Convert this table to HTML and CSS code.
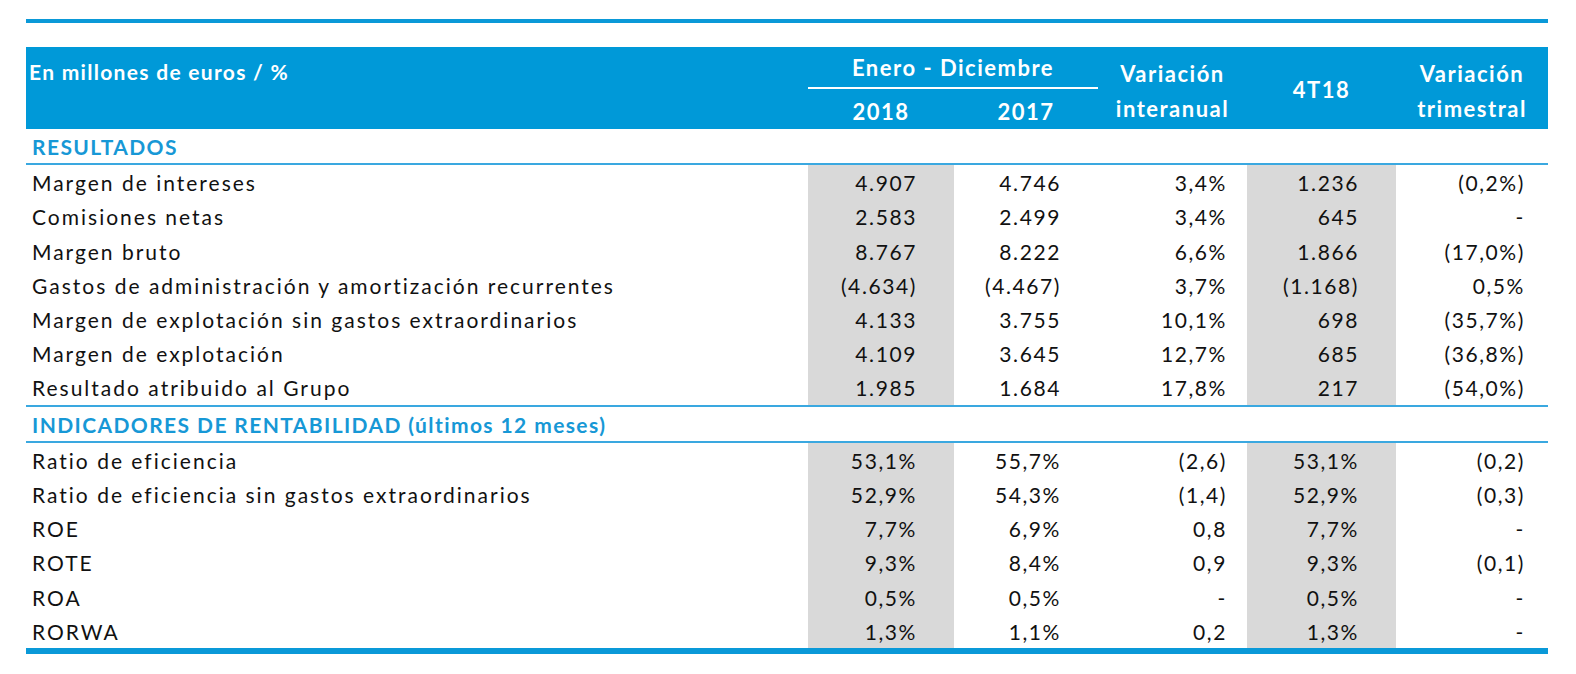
FILE: index.html
```html
<!DOCTYPE html>
<html lang="es">
<head>
<meta charset="utf-8">
<title>Resultados</title>
<link rel="stylesheet" href="styles.css">
</head>
<body>
<div class="wrap">
  <div class="top-rule"></div>
  <table class="fin">
    <colgroup>
      <col class="c-label"><col class="c-2018"><col class="c-2017"><col class="c-var"><col class="c-4t"><col class="c-tri">
    </colgroup>
    <thead>
      <tr class="h1">
        <th class="h-label" rowspan="2">En millones de euros / %</th>
        <th class="h-period" colspan="2"><span>Enero - Diciembre</span></th>
        <th class="h-two" rowspan="2">Variación<br>interanual</th>
        <th class="h-one" rowspan="2">4T18</th>
        <th class="h-two" rowspan="2">Variación<br>trimestral</th>
      </tr>
      <tr class="h2">
        <th class="h-year">2018</th>
        <th class="h-year">2017</th>
      </tr>
    </thead>
    <tbody>
      <tr class="sec"><td colspan="6">RESULTADOS</td></tr>
      <tr><td>Margen de intereses</td><td class="g">4.907</td><td>4.746</td><td class="v">3,4%</td><td class="g">1.236</td><td class="t">(0,2%)</td></tr>
      <tr><td>Comisiones netas</td><td class="g">2.583</td><td>2.499</td><td class="v">3,4%</td><td class="g">645</td><td class="t">-</td></tr>
      <tr><td>Margen bruto</td><td class="g">8.767</td><td>8.222</td><td class="v">6,6%</td><td class="g">1.866</td><td class="t">(17,0%)</td></tr>
      <tr><td>Gastos de administración y amortización recurrentes</td><td class="g">(4.634)</td><td>(4.467)</td><td class="v">3,7%</td><td class="g">(1.168)</td><td class="t">0,5%</td></tr>
      <tr><td>Margen de explotación sin gastos extraordinarios</td><td class="g">4.133</td><td>3.755</td><td class="v">10,1%</td><td class="g">698</td><td class="t">(35,7%)</td></tr>
      <tr><td>Margen de explotación</td><td class="g">4.109</td><td>3.645</td><td class="v">12,7%</td><td class="g">685</td><td class="t">(36,8%)</td></tr>
      <tr class="last"><td>Resultado atribuido al Grupo</td><td class="g">1.985</td><td>1.684</td><td class="v">17,8%</td><td class="g">217</td><td class="t">(54,0%)</td></tr>
      <tr class="sec"><td colspan="6">INDICADORES DE RENTABILIDAD (últimos 12 meses)</td></tr>
      <tr><td>Ratio de eficiencia</td><td class="g">53,1%</td><td>55,7%</td><td class="v">(2,6)</td><td class="g">53,1%</td><td class="t">(0,2)</td></tr>
      <tr><td>Ratio de eficiencia sin gastos extraordinarios</td><td class="g">52,9%</td><td>54,3%</td><td class="v">(1,4)</td><td class="g">52,9%</td><td class="t">(0,3)</td></tr>
      <tr><td>ROE</td><td class="g">7,7%</td><td>6,9%</td><td class="v">0,8</td><td class="g">7,7%</td><td class="t">-</td></tr>
      <tr><td>ROTE</td><td class="g">9,3%</td><td>8,4%</td><td class="v">0,9</td><td class="g">9,3%</td><td class="t">(0,1)</td></tr>
      <tr><td>ROA</td><td class="g">0,5%</td><td>0,5%</td><td class="v">-</td><td class="g">0,5%</td><td class="t">-</td></tr>
      <tr><td>RORWA</td><td class="g">1,3%</td><td>1,1%</td><td class="v">0,2</td><td class="g">1,3%</td><td class="t">-</td></tr>
    </tbody>
  </table>
  <div class="bottom-rule"></div>
</div>
</body>
</html>
```

FILE: styles.css
```css
html, body {
  margin: 0;
  padding: 0;
  background: #ffffff;
}

.wrap {
  width: 1522px;
  margin: 19px 0 0 26px;
  font-family: Lato, "Open Sans", sans-serif;
  color: #111111;
}

.top-rule {
  height: 4px;
  background: #0a99d8;
  margin-bottom: 24px;
}

.bottom-rule {
  height: 6px;
  background: #0a99d8;
}

.fin {
  width: 1522px;
  border-collapse: collapse;
  table-layout: fixed;
}

.c-label { width: 782px; }
.c-2018 { width: 146px; }
.c-2017 { width: 144px; }
.c-var { width: 149px; }
.c-4t { width: 149px; }
.c-tri { width: 152px; }

.fin thead th {
  background: #0099d8;
  color: #ffffff;
  font-weight: 700;
  font-size: 22px;
  letter-spacing: 1.5px;
  padding: 0;
}

.h1 { height: 42px; }
.h2 { height: 40px; }

.fin th.h-label {
  text-align: left;
  vertical-align: top;
  padding: 12px 0 0 3px;
  font-size: 21px;
  letter-spacing: 1.3px;
  line-height: 26px;
}

.fin th.h-period {
  vertical-align: bottom;
  padding: 0;
}

.h-period span {
  display: block;
  border-bottom: 2px solid #ffffff;
  padding-bottom: 6px;
  line-height: 26px;
}

.fin th.h-two {
  line-height: 35px;
  padding-top: 5px;
}

.fin th.h-one {
  padding-top: 3px;
}

.fin th.h-year {
  vertical-align: middle;
  padding-top: 4px;
}

.fin tbody td {
  height: 32.2px;
  padding: 2px 0 0 0;
  font-size: 21px;
  letter-spacing: 1.6px;
  text-align: right;
  vertical-align: middle;
  line-height: 24px;
  white-space: nowrap;
}

.fin tbody td:first-child {
  text-align: left;
  padding-left: 6px;
  letter-spacing: 2px;
}

.fin tbody td:nth-child(2),
.fin tbody td:nth-child(3),
.fin tbody td:nth-child(5) {
  padding-right: 37px;
}

.fin tbody td.v { padding-right: 20px; }
.fin tbody td.t { padding-right: 23px; }

.fin tbody td.g { background: #d9d9d9; }

.fin tbody tr.sec td {
  color: #1798d6;
  font-weight: 700;
  letter-spacing: 1.4px;
  border-bottom: 2px solid #3aa8e0;
}

.fin tbody tr.last td {
  border-bottom: 2px solid #3aa8e0;
}
```
